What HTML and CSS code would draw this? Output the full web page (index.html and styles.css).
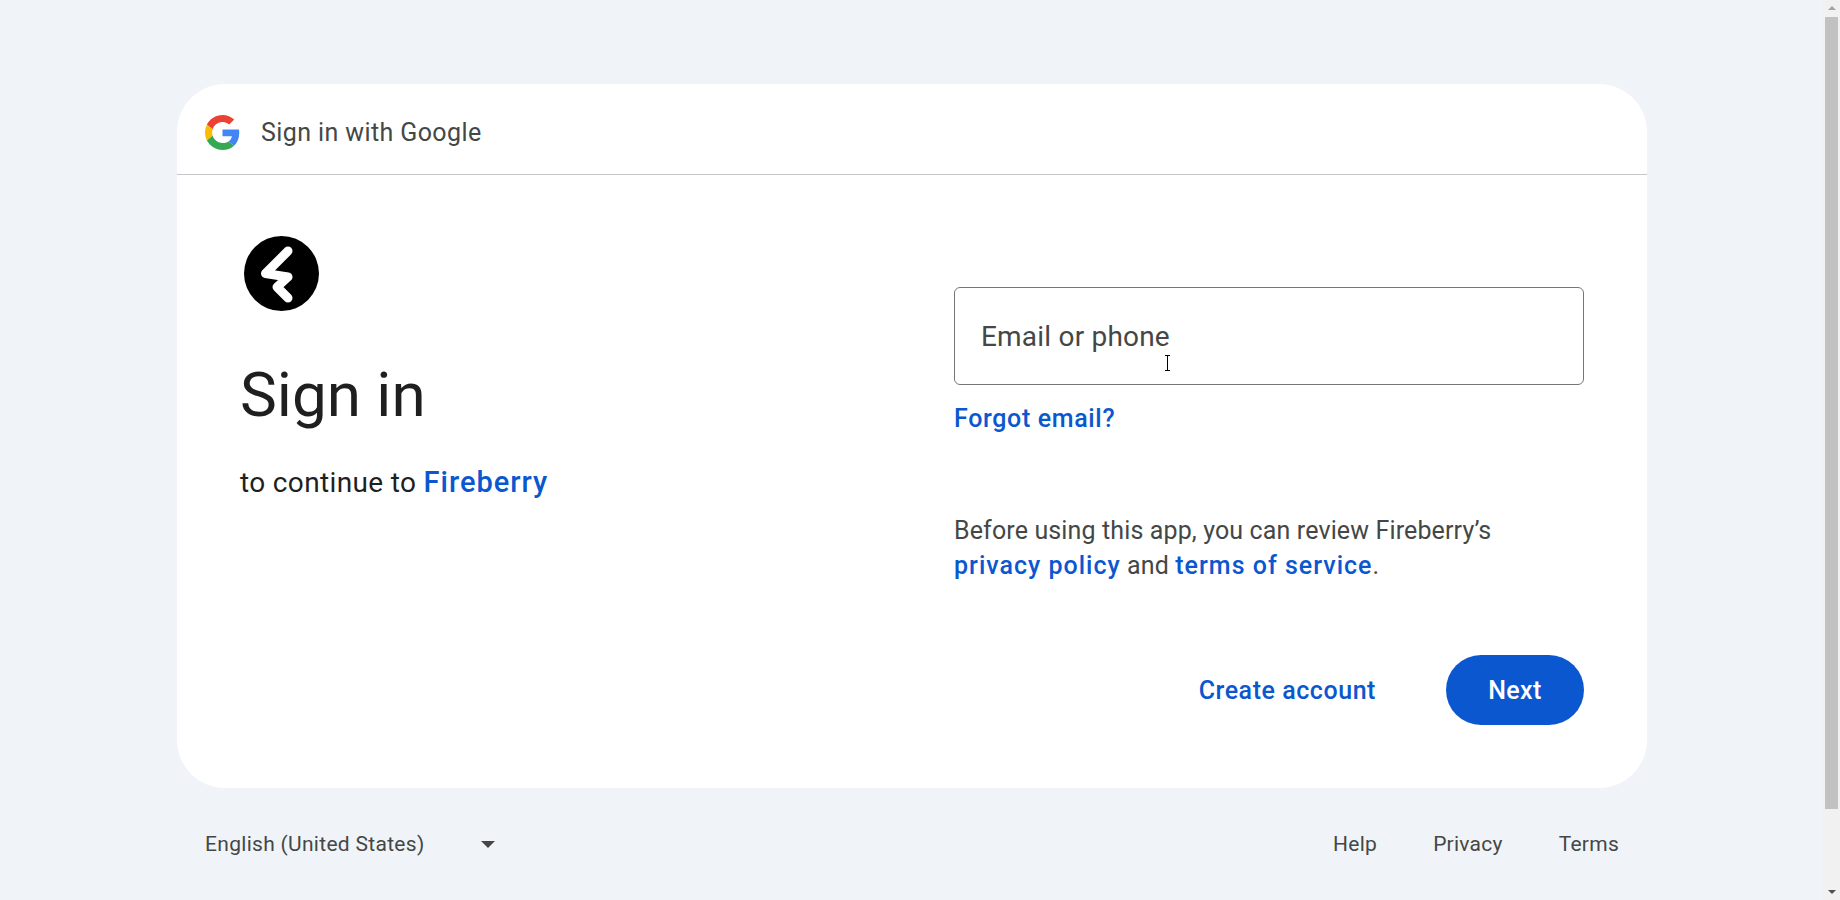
FILE: index.html
```html
<!DOCTYPE html>
<html lang="en">
<head>
  <meta charset="UTF-8" />
  <title>Sign in - Google Accounts</title>
  <link rel="stylesheet" href="styles.css">
</head>
<body>
  <main class="page">
    <section class="card">
      <header class="card-header">
        <svg class="google-logo" viewBox="0 0 48 48">
          <path fill="#EA4335" d="M24 9.5c3.54 0 6.71 1.22 9.21 3.6l6.85-6.85C35.9 2.38 30.47 0 24 0 14.62 0 6.51 5.38 2.56 13.22l7.98 6.19C12.43 13.72 17.74 9.5 24 9.5z"/>
          <path fill="#4285F4" d="M46.98 24.55c0-1.57-.15-3.09-.38-4.55H24v9.02h12.94c-.58 2.96-2.26 5.48-4.78 7.18l7.73 6c4.51-4.18 7.09-10.36 7.09-17.65z"/>
          <path fill="#FBBC05" d="M10.53 28.59c-.48-1.45-.76-2.99-.76-4.59s.27-3.14.76-4.59l-7.98-6.19C.92 16.46 0 20.12 0 24c0 3.88.92 7.54 2.56 10.78l7.97-6.19z"/>
          <path fill="#34A853" d="M24 48c6.48 0 11.93-2.13 15.89-5.81l-7.73-6c-2.15 1.45-4.92 2.3-8.16 2.3-6.26 0-11.57-4.22-13.47-9.91l-7.98 6.19C6.51 42.62 14.62 48 24 48z"/>
        </svg>
        <span class="header-title">Sign in with Google</span>
      </header>

      <div class="card-body">
        <div class="intro">
          <svg class="app-logo" viewBox="0 0 75 75">
            <circle cx="37.5" cy="37.5" r="37.5" fill="#000"/>
            <path d="M44 15 L21.5 37.5 L44 41 L33 51 L44 62" fill="none" stroke="#fff" stroke-width="9" stroke-linecap="round" stroke-linejoin="round"/>
          </svg>
          <h1>Sign in</h1>
          <p class="subtitle">to continue to <a href="#">Fireberry</a></p>
        </div>

        <form class="login">
          <div class="field">
            <span class="placeholder">Email or phone</span>
            <svg class="cursor" viewBox="0 0 7 16">
              <path d="M1 .5h5M3.5.5v15M1 15.5h5" fill="none" stroke="#000" stroke-width="1"/>
            </svg>
          </div>
          <a class="forgot" href="#">Forgot email?</a>
          <p class="notice">Before using this app, you can review Fireberry’s<br><a href="#">privacy policy</a> and <a href="#">terms of service</a>.</p>
          <div class="actions">
            <a class="create" href="#">Create account</a>
            <button type="button" class="next">Next</button>
          </div>
        </form>
      </div>
    </section>

    <footer class="footer">
      <div class="lang">
        <span>English (United States)</span>
        <span class="caret"></span>
      </div>
      <nav class="footer-links">
        <a href="#">Help</a>
        <a href="#">Privacy</a>
        <a href="#">Terms</a>
      </nav>
    </footer>
  </main>

  <div class="scrollbar">
    <span class="arrow-up"></span>
    <div class="track"><div class="thumb"></div></div>
    <span class="arrow-down"></span>
  </div>
</body>
</html>
```

FILE: styles.css
```css
html, body {
  height: 100%;
}

body {
  margin: 0;
  display: flex;
  overflow: hidden;
  background-color: #f0f4f9;
  font-family: Roboto, "Liberation Sans", sans-serif;
  color: #1f1f1f;
}

a {
  color: #0b57d0;
  text-decoration: none;
}

.page {
  flex: 1;
  padding: 84px 176px 0 177px;
}

.card {
  height: 704px;
  background-color: #fff;
  border-radius: 48px;
  display: flex;
  flex-direction: column;
}

.card-header {
  height: 83px;
  padding: 7px 28px 0;
  display: flex;
  align-items: center;
  gap: 21px;
  border-bottom: 1px solid #c7c7c7;
}

.google-logo {
  width: 35px;
  height: 35px;
}

.header-title {
  font-size: 25px;
  letter-spacing: 0.4px;
  color: #444746;
}

.card-body {
  flex: 1;
  padding: 61px 63px 63px;
  display: flex;
  justify-content: space-between;
}

.app-logo {
  display: block;
  width: 75px;
  height: 75px;
  margin-left: 4px;
}

h1 {
  margin: 46px 0 0;
  font-size: 62px;
  line-height: 76px;
  font-weight: 400;
}

.subtitle {
  margin: 31px 0 0;
  font-size: 28px;
  line-height: 36px;
  letter-spacing: 0.35px;
}

.subtitle a {
  font-size: 29px;
  font-weight: 500;
  letter-spacing: 1px;
}

.login {
  width: 630px;
  padding-top: 51px;
  display: flex;
  flex-direction: column;
}

.field {
  position: relative;
  height: 96px;
  padding-left: 26px;
  display: flex;
  align-items: center;
  border: 1px solid #747775;
  border-radius: 6px;
}

.placeholder {
  font-size: 28px;
  letter-spacing: 0.2px;
  color: #444746;
}

.cursor {
  position: absolute;
  left: 209px;
  top: 67px;
  width: 7px;
  height: 16px;
}

.forgot {
  margin-top: 17px;
  font-size: 25px;
  line-height: 34px;
  font-weight: 500;
  letter-spacing: 0.65px;
}

.notice {
  margin: 77px 0 0;
  font-size: 25px;
  line-height: 35px;
  letter-spacing: 0.13px;
  color: #444746;
}

.notice a {
  font-weight: 500;
  letter-spacing: 1px;
}

.actions {
  margin-top: auto;
  display: flex;
  justify-content: flex-end;
  align-items: center;
  gap: 70px;
}

.create {
  font-size: 25px;
  font-weight: 500;
  letter-spacing: 0.55px;
}

.next {
  width: 138px;
  height: 70px;
  border: none;
  border-radius: 35px;
  background-color: #0b57d0;
  color: #fff;
  font-family: inherit;
  font-size: 25px;
  font-weight: 500;
  letter-spacing: 0.4px;
}

.footer {
  height: 112px;
  padding: 0 28px;
  display: flex;
  justify-content: space-between;
  align-items: center;
  font-size: 21px;
  letter-spacing: 0.3px;
  color: #444746;
}

.lang {
  display: flex;
  align-items: center;
  gap: 56px;
}

.caret {
  border-left: 7px solid transparent;
  border-right: 7px solid transparent;
  border-top: 7px solid #444746;
}

.footer-links {
  display: flex;
  gap: 56px;
  letter-spacing: 0.25px;
}

.footer-links a {
  color: #444746;
}

.scrollbar {
  width: 17px;
  flex-shrink: 0;
  display: flex;
  flex-direction: column;
  align-items: center;
  background-color: #f1f1f1;
}

.arrow-up,
.arrow-down {
  margin: 6px 0;
  border-left: 4px solid transparent;
  border-right: 4px solid transparent;
}

.arrow-up {
  border-bottom: 4px solid #a3a3a3;
}

.arrow-down {
  border-top: 4px solid #505050;
}

.track {
  flex: 1;
  width: 100%;
  padding: 0 2px;
  box-sizing: border-box;
}

.thumb {
  height: 792px;
  margin-top: 1px;
  background-color: #c1c1c1;
}
```
